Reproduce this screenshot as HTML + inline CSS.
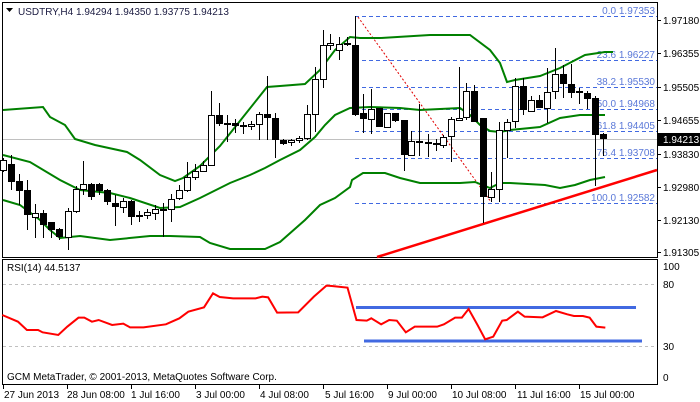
<!DOCTYPE html>
<html><head><meta charset="utf-8"><style>
html,body{margin:0;padding:0;background:#fff;width:700px;height:402px;overflow:hidden}
svg{display:block}
text{font-family:"Liberation Sans",sans-serif;font-size:10px}
</style></head><body>
<svg width="700" height="402" viewBox="0 0 700 402" xmlns="http://www.w3.org/2000/svg" shape-rendering="crispEdges">
<rect width="700" height="402" fill="#fff"/>
<!-- frames -->
<rect x="2.5" y="2.5" width="655" height="255" fill="none" stroke="#000"/>
<rect x="2.5" y="259.5" width="655" height="125" fill="none" stroke="#000"/>
<!-- current price line -->
<line x1="3" y1="139.5" x2="657" y2="139.5" stroke="#c0c0c0"/>
<!-- fib lines -->
<g stroke="#4169e1" stroke-dasharray="4,3">
<line x1="355" y1="16.5" x2="657" y2="16.5"/>
<line x1="355" y1="60.5" x2="657" y2="60.5"/>
<line x1="355" y1="87.5" x2="657" y2="87.5"/>
<line x1="355" y1="109.5" x2="657" y2="109.5"/>
<line x1="355" y1="131.5" x2="657" y2="131.5"/>
<line x1="355" y1="158.5" x2="657" y2="158.5"/>
<line x1="355" y1="203.5" x2="657" y2="203.5"/>
</g>
<g fill="#5a78d8" text-anchor="end">
<text x="655" y="14">0.0 1.97353</text>
<text x="655" y="58">23.6 1.96227</text>
<text x="655" y="85">38.2 1.95530</text>
<text x="655" y="107">50.0 1.94968</text>
<text x="655" y="129">61.8 1.94405</text>
<text x="655" y="156">76.4 1.93708</text>
<text x="655" y="201">100.0 1.92582</text>
</g>
<!-- red dotted -->
<line x1="358" y1="17" x2="491" y2="202" stroke="#e00000" stroke-dasharray="2,2" shape-rendering="auto"/>
<!-- bollinger -->
<g fill="none" stroke="#008000" stroke-width="2" shape-rendering="auto">
<polyline points="3,110 43,107 50,117 65,125 75,139 95,145 127,152 140,160 160,175 175,181 183,178 200,166 220,146 267,87 280,86 305,84 320,70 335,50 350,37 360,38 380,38 430,35 470,35 490,50 500,63 507,82 515,80 540,76 560,68 585,55 605,52 613,52"/>
<polyline points="3,155 30,162 60,180 80,190 110,193 130,198 160,208 180,207 200,198 230,183 250,175 265,168 280,160 300,150 315,137 325,125 335,115 350,108 370,107 400,108 420,110 460,108 470,115 480,125 490,131 500,132 510,130 540,127 560,118 580,115 605,115"/>
<polyline points="3,200 20,205 40,220 50,230 60,238 70,237 80,236 110,240 150,236 170,236 200,237 210,243 230,249 265,249 280,242 305,220 320,205 335,198 350,187 352,180 363,173 385,173 400,178 420,183 440,183 460,183 475,182 490,188 500,183 510,183 545,185 560,188 575,185 590,180 605,177"/>
</g>
<!-- red trendline -->
<line x1="377" y1="257" x2="657" y2="170" stroke="#ff0000" stroke-width="2.5" shape-rendering="auto"/>
<!-- wicks -->
<path stroke="#000" fill="none" d="M3.5 158V172M11.5 155V190M19.5 174V205M27.5 180V230M35.5 204V238M43.5 210V238M51.5 222V238M59.5 228V240M68.5 208V250M76.5 186V213M83.5 161V195M91.5 183V200M99.5 183V195M107.5 189V205M115.5 195V226M123.5 198V213M131.5 200V225M139.5 211V222M147.5 209V219M155.5 205V220M163.5 203V237M171.5 194V222M179.5 185V200M187.5 162V192M195.5 164V180M203.5 161V172M211.5 91V166M219.5 103V126M227.5 115V142M235.5 119V133M243.5 122V134M251.5 121V130M259.5 112V140M267.5 76V140M275.5 113V158M283.5 139V145M291.5 139V146M299.5 136V143M307.5 105V140M315.5 67V132M323.5 30V88M330.5 34V50M339.5 37V60M347.5 37V46M355.5 16V116M363.5 94V133M371.5 89V134M379.5 108V127M387.5 113V128M395.5 113V122M404.5 120V171M411.5 131V156M419.5 104V156M428.5 134V157M436.5 139V151M443.5 135V148M451.5 117V162M459.5 67V121M466.5 83V120M474.5 85V122M483.5 118V223M491.5 172V202M499.5 122V202M507.5 119V158M515.5 78V128M523.5 78V115M531.5 96V111M539.5 95V108M547.5 68V123M555.5 48V99M563.5 65V98M571.5 64V98M579.5 88V104M587.5 91V109M595.5 96V186M603.5 133V156"/>
<!-- black bodies -->
<g fill="#000">
<rect x="8" y="164" width="7" height="18"/><rect x="16" y="181" width="7" height="10"/><rect x="24" y="190" width="7" height="25"/><rect x="40" y="213" width="7" height="12"/><rect x="48" y="222" width="7" height="8"/><rect x="56" y="229" width="7" height="8"/><rect x="88" y="184" width="7" height="13"/><rect x="96" y="184" width="7" height="7"/><rect x="104" y="190" width="7" height="12"/><rect x="112" y="203" width="7" height="4"/><rect x="128" y="201" width="7" height="16"/><rect x="136" y="215" width="7" height="2"/><rect x="160" y="209" width="7" height="2"/><rect x="216" y="115" width="7" height="9"/><rect x="224" y="123" width="7" height="2"/><rect x="232" y="123" width="7" height="3"/><rect x="240" y="125" width="7" height="2"/><rect x="264" y="114" width="7" height="4"/><rect x="272" y="118" width="7" height="22"/><rect x="280" y="140" width="7" height="4"/><rect x="344" y="43" width="7" height="2"/><rect x="352" y="45" width="7" height="70"/><rect x="360" y="113" width="7" height="6"/><rect x="376" y="108" width="7" height="19"/><rect x="392" y="113" width="7" height="8"/><rect x="401" y="120" width="7" height="35"/><rect x="416" y="141" width="7" height="2"/><rect x="425" y="142" width="7" height="2"/><rect x="433" y="143" width="7" height="2"/><rect x="471" y="91" width="7" height="31"/><rect x="480" y="118" width="7" height="79"/><rect x="520" y="86" width="7" height="24"/><rect x="536" y="100" width="7" height="8"/><rect x="560" y="74" width="7" height="10"/><rect x="568" y="84" width="7" height="9"/><rect x="576" y="91" width="7" height="2"/><rect x="584" y="93" width="7" height="6"/><rect x="592" y="98" width="7" height="37"/><rect x="600" y="134" width="7" height="5"/>
</g>
<!-- white bodies -->
<g fill="#fff" stroke="#000">
<rect x="0.5" y="160.5" width="6" height="10"/><rect x="32.5" y="213.5" width="6" height="4"/><rect x="65.5" y="211.5" width="6" height="26"/><rect x="73.5" y="189.5" width="6" height="22"/><rect x="80.5" y="184.5" width="6" height="5"/><rect x="120.5" y="201.5" width="6" height="6"/><rect x="144.5" y="212.5" width="6" height="3"/><rect x="152.5" y="209.5" width="6" height="4"/><rect x="168.5" y="199.5" width="6" height="10"/><rect x="176.5" y="190.5" width="6" height="8"/><rect x="184.5" y="177.5" width="6" height="13"/><rect x="192.5" y="171.5" width="6" height="6"/><rect x="200.5" y="165.5" width="6" height="6"/><rect x="208.5" y="115.5" width="6" height="50"/><rect x="248.5" y="124.5" width="6" height="2"/><rect x="256.5" y="114.5" width="6" height="10"/><rect x="288.5" y="140.5" width="6" height="2"/><rect x="296.5" y="138.5" width="6" height="2"/><rect x="304.5" y="114.5" width="6" height="24"/><rect x="312.5" y="79.5" width="6" height="35"/><rect x="320.5" y="45.5" width="6" height="34"/><rect x="327.5" y="43.5" width="6" height="2"/><rect x="336.5" y="44.5" width="6" height="6"/><rect x="368.5" y="109.5" width="6" height="10"/><rect x="384.5" y="113.5" width="6" height="14"/><rect x="408.5" y="141.5" width="6" height="14"/><rect x="440.5" y="137.5" width="6" height="8"/><rect x="448.5" y="119.5" width="6" height="17"/><rect x="456.5" y="118.5" width="6" height="2"/><rect x="463.5" y="91.5" width="6" height="26"/><rect x="488.5" y="189.5" width="6" height="8"/><rect x="496.5" y="130.5" width="6" height="59"/><rect x="504.5" y="122.5" width="6" height="8"/><rect x="512.5" y="86.5" width="6" height="35"/><rect x="528.5" y="100.5" width="6" height="11"/><rect x="544.5" y="92.5" width="6" height="16"/><rect x="552.5" y="74.5" width="6" height="17"/>
</g>
<!-- header -->
<path d="M6 8H13L9.5 12Z" fill="#000" shape-rendering="auto"/>
<text x="18" y="15" fill="#1a1a40">USDTRY,H4  1.94294 1.94350 1.93775 1.94213</text>
<!-- price axis -->
<g stroke="#000"><line x1="657" y1="20.5" x2="661" y2="20.5"/><line x1="657" y1="53.5" x2="661" y2="53.5"/><line x1="657" y1="87.5" x2="661" y2="87.5"/><line x1="657" y1="120.5" x2="661" y2="120.5"/><line x1="657" y1="154.5" x2="661" y2="154.5"/><line x1="657" y1="187.5" x2="661" y2="187.5"/><line x1="657" y1="220.5" x2="661" y2="220.5"/><line x1="657" y1="252.5" x2="661" y2="252.5"/></g>
<g fill="#000">
<text x="663" y="24">1.97180</text><text x="663" y="57">1.96355</text><text x="663" y="91">1.95505</text><text x="663" y="124">1.94655</text><text x="663" y="158">1.93830</text><text x="663" y="191">1.92980</text><text x="663" y="224">1.92130</text><text x="663" y="256">1.91305</text>
</g>
<rect x="658" y="133" width="42" height="13" fill="#000"/>
<text x="663" y="143" fill="#fff">1.94213</text>
<!-- RSI -->
<line x1="3" y1="284.5" x2="657" y2="284.5" stroke="#c0c0c0" stroke-dasharray="3,3"/>
<line x1="3" y1="346.5" x2="657" y2="346.5" stroke="#c0c0c0" stroke-dasharray="3,3"/>
<text x="7" y="271" fill="#000">RSI(14) 44.5137</text>
<text x="7" y="380" fill="#000">GCM MetaTrader, © 2001-2013, MetaQuotes Software Corp.</text>
<g fill="#000"><text x="663" y="270">100</text><text x="663" y="288">80</text><text x="663" y="350">30</text><text x="663" y="381">0</text></g>
<line x1="356" y1="307.5" x2="636" y2="307.5" stroke="#4169e1" stroke-width="3"/>
<line x1="364" y1="341" x2="642" y2="341" stroke="#4169e1" stroke-width="3"/>
<g transform="translate(0,255) scale(0.4484,0.3333)">
<polyline fill="none" stroke="#ff0000" stroke-width="2" vector-effect="non-scaling-stroke" shape-rendering="auto" points="5,180 40,200 60,225 85,225 95,232 130,240 150,215 175,188 188,188 205,200 220,195 250,210 275,206 290,217 320,217 370,208 400,190 420,170 455,157 475,115 490,126 520,130 570,130 585,125 598,127 618,173 665,172 700,125 728,92 740,93 775,98 795,195 818,197 828,190 850,208 868,195 885,197 905,232 925,215 975,215 990,208 1015,188 1030,188 1045,162 1065,210 1082,253 1100,245 1120,197 1130,195 1155,170 1170,185 1210,187 1240,168 1265,178 1280,183 1300,183 1315,188 1330,215 1350,218"/>
</g>
<!-- time axis -->
<g stroke="#000"><line x1="3.5" y1="385" x2="3.5" y2="389"/><line x1="67.5" y1="385" x2="67.5" y2="389"/><line x1="131.5" y1="385" x2="131.5" y2="389"/><line x1="195.5" y1="385" x2="195.5" y2="389"/><line x1="259.5" y1="385" x2="259.5" y2="389"/><line x1="323.5" y1="385" x2="323.5" y2="389"/><line x1="387.5" y1="385" x2="387.5" y2="389"/><line x1="451.5" y1="385" x2="451.5" y2="389"/><line x1="515.5" y1="385" x2="515.5" y2="389"/><line x1="579.5" y1="385" x2="579.5" y2="389"/></g>
<g fill="#000">
<text x="4" y="398">27 Jun 2013</text><text x="67" y="398">28 Jun 08:00</text><text x="131" y="398">1 Jul 16:00</text><text x="196" y="398">3 Jul 00:00</text><text x="260" y="398">4 Jul 08:00</text><text x="325" y="398">5 Jul 16:00</text><text x="388" y="398">9 Jul 00:00</text><text x="452" y="398">10 Jul 08:00</text><text x="517" y="398">11 Jul 16:00</text><text x="580" y="398">15 Jul 00:00</text>
</g>
</svg>
</body></html>
